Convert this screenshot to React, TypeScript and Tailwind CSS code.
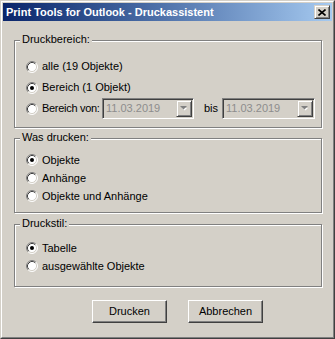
import type { JSX } from "react";

const FACE = "#d4d0c8";

function Radio({ checked }: { checked?: boolean }): JSX.Element {
  return (
    <svg width="12" height="12" viewBox="0 0 12 12" className="shrink-0">
      <circle cx="6" cy="6" r="5" fill="#fff" />
      <path d="M2.11 9.89 A5.5 5.5 0 0 1 9.89 2.11" fill="none" stroke="#808080" />
      <path d="M9.89 2.11 A5.5 5.5 0 0 1 2.11 9.89" fill="none" stroke="#fff" />
      <path d="M2.82 9.18 A4.5 4.5 0 0 1 9.18 2.82" fill="none" stroke="#404040" />
      <path d="M9.18 2.82 A4.5 4.5 0 0 1 2.82 9.18" fill="none" stroke={FACE} />
      {checked && <circle cx="6" cy="6" r="2" fill="#000" />}
    </svg>
  );
}

function RadioRow({
  label,
  checked,
  h,
}: {
  label: string;
  checked?: boolean;
  h: string;
}): JSX.Element {
  return (
    <div className={`flex items-center gap-[4px] whitespace-nowrap ${h}`}>
      <Radio checked={checked} />
      <span>{label}</span>
    </div>
  );
}

function DateCombo({ w }: { w: string }): JSX.Element {
  return (
    <div
      className={`flex h-[21px] shrink-0 ${w} border border-t-[#808080] border-l-[#808080] border-r-white border-b-white p-[1px] shadow-[inset_1px_1px_0_#404040,inset_-1px_-1px_0_#d4d0c8]`}
    >
      <span className="flex-1 pl-[2px] leading-[17px] text-[#8d8d8d]">
        11.03.2019
      </span>
      <div className="flex w-[16px] items-center justify-center border border-t-[#d4d0c8] border-l-[#d4d0c8] border-r-[#404040] border-b-[#404040] bg-[#d4d0c8] shadow-[inset_1px_1px_0_#fff,inset_-1px_-1px_0_#808080]">
        <svg width="8" height="5" viewBox="0 0 8 5">
          <path d="M1 1h5L3.5 3.5z" fill="#fff" transform="translate(1 1)" />
          <path d="M0 0h7L3.5 3.5z" fill="#808080" />
        </svg>
      </div>
    </div>
  );
}

function Group({
  title,
  className,
  children,
}: {
  title: string;
  className: string;
  children: React.ReactNode;
}): JSX.Element {
  return (
    <div
      className={`relative ml-[11px] w-[308px] border border-[#808080] shadow-[inset_1px_1px_0_#fff,1px_1px_0_#fff] ${className}`}
    >
      <span className="absolute -top-[8px] left-[5px] bg-[#d4d0c8] px-[2px] leading-[13px]">
        {title}
      </span>
      {children}
    </div>
  );
}

function Button({ label }: { label: string }): JSX.Element {
  return (
    <button className="h-[23px] w-[75px] border border-t-white border-l-white border-r-[#404040] border-b-[#404040] bg-[#d4d0c8] text-black shadow-[inset_-1px_-1px_0_#808080]">
      {label}
    </button>
  );
}

export default function App(): JSX.Element {
  return (
    <div className="h-[339px] w-[335px] border border-t-[#d4d0c8] border-l-[#d4d0c8] border-r-[#404040] border-b-[#404040] bg-[#d4d0c8] font-['Liberation_Sans',Arial,sans-serif] text-[11px] text-black">
      <div className="h-full border border-t-white border-l-white border-r-[#808080] border-b-[#808080] p-[1px]">
        <div className="flex h-[18px] items-center justify-between bg-gradient-to-r from-[#0a246a] to-[#a6caf0] pl-[3px] pr-[2px]">
          <span className="text-[11px] font-bold text-white">
            Print Tools for Outlook - Druckassistent
          </span>
          <div className="flex h-[14px] w-[16px] items-center justify-center border border-t-[#d4d0c8] border-l-[#d4d0c8] border-r-[#404040] border-b-[#404040] bg-[#d4d0c8] shadow-[inset_1px_1px_0_#fff,inset_-1px_-1px_0_#808080]">
            <svg width="8" height="7" viewBox="0 0 8 7">
              <path d="M0.5 0.5 L7.5 6.5 M7.5 0.5 L0.5 6.5" stroke="#000" strokeWidth="1.6" />
            </svg>
          </div>
        </div>

        <Group title="Druckbereich:" className="mt-[19px] h-[88px] pt-[15px] pl-[11px]">
          <RadioRow h="h-[21px]" label="alle (19 Objekte)" />
          <RadioRow h="h-[21px]" label="Bereich (1 Objekt)" checked />
          <div className="flex h-[21px] items-center whitespace-nowrap">
            <Radio />
            <span className="ml-[4px] w-[60px] shrink-0 tracking-[-0.3px]">Bereich von:</span>
            <DateCombo w="w-[92px]" />
            <span className="ml-[10px] w-[18px] shrink-0">bis</span>
            <DateCombo w="w-[93px]" />
          </div>
        </Group>

        <Group title="Was drucken:" className="mt-[10px] h-[75px] pt-[12px] pl-[11px]">
          <RadioRow h="h-[18px]" label="Objekte" checked />
          <RadioRow h="h-[18px]" label="Anhänge" />
          <RadioRow h="h-[18px]" label="Objekte und Anhänge" />
        </Group>

        <Group title="Druckstil:" className="mt-[11px] h-[63px] pt-[14px] pl-[11px]">
          <RadioRow h="h-[18px]" label="Tabelle" checked />
          <RadioRow h="h-[18px]" label="ausgewählte Objekte" />
        </Group>

        <div className="mt-[13px] ml-[89px] flex gap-[21px]">
          <Button label="Drucken" />
          <Button label="Abbrechen" />
        </div>
      </div>
    </div>
  );
}
